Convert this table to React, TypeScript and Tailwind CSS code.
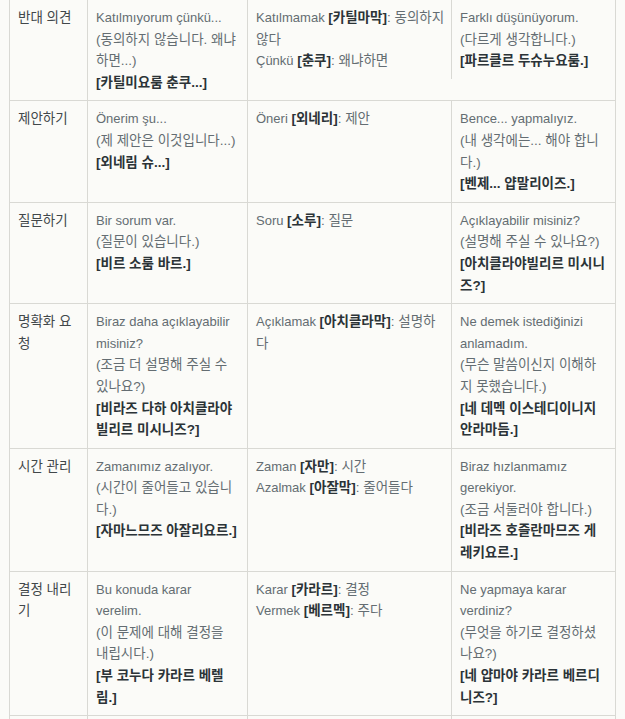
import React from "react"

type Triple = [string, string, string]

interface Row {
  label: string
  phrase: Triple
  words: Triple[]
  alt: Triple
}

// line breaks follow the narrow table columns
const rows: Row[] = [
  {
    label: "반대 의견",
    phrase: ["Katılmıyorum çünkü...", "(동의하지 않습니다. 왜냐\n하면...)", "[카틸미요룸 춘쿠...]"],
    words: [
      ["Katılmamak", "카틸마막", "동의하지\n않다"],
      ["Çünkü", "춘쿠", "왜냐하면"],
    ],
    alt: ["Farklı düşünüyorum.", "(다르게 생각합니다.)", "[파르클르 두슈누요룸.]"],
  },
  {
    label: "제안하기",
    phrase: ["Önerim şu...", "(제 제안은 이것입니다...)", "[외네림 슈...]"],
    words: [["Öneri", "외네리", "제안"]],
    alt: ["Bence... yapmalıyız.", "(내 생각에는... 해야 합니\n다.)", "[벤제... 얍말리이즈.]"],
  },
  {
    label: "질문하기",
    phrase: ["Bir sorum var.", "(질문이 있습니다.)", "[비르 소룸 바르.]"],
    words: [["Soru", "소루", "질문"]],
    alt: ["Açıklayabilir misiniz?", "(설명해 주실 수 있나요?)", "[아치클라야빌리르 미시니\n즈?]"],
  },
  {
    label: "명확화 요\n청",
    phrase: [
      "Biraz daha açıklayabilir\nmisiniz?",
      "(조금 더 설명해 주실 수\n있나요?)",
      "[비라즈 다하 아치클라야\n빌리르 미시니즈?]",
    ],
    words: [["Açıklamak", "아치클라막", "설명하\n다"]],
    alt: [
      "Ne demek istediğinizi\nanlamadım.",
      "(무슨 말씀이신지 이해하\n지 못했습니다.)",
      "[네 데멕 이스테디이니지\n안라마듬.]",
    ],
  },
  {
    label: "시간 관리",
    phrase: ["Zamanımız azalıyor.", "(시간이 줄어들고 있습니\n다.)", "[자마느므즈 아잘리요르.]"],
    words: [
      ["Zaman", "자만", "시간"],
      ["Azalmak", "아잘막", "줄어들다"],
    ],
    alt: ["Biraz hızlanmamız\ngerekiyor.", "(조금 서둘러야 합니다.)", "[비라즈 호즐란마므즈 게\n레키요르.]"],
  },
  {
    label: "결정 내리\n기",
    phrase: ["Bu konuda karar\nverelim.", "(이 문제에 대해 결정을\n내립시다.)", "[부 코누다 카라르 베렐\n림.]"],
    words: [
      ["Karar", "카라르", "결정"],
      ["Vermek", "베르멕", "주다"],
    ],
    alt: ["Ne yapmaya karar\nverdiniz?", "(무엇을 하기로 결정하셨\n나요?)", "[네 얍마야 카라르 베르디\n니즈?]"],
  },
  {
    label: "회의 마무\n리",
    phrase: ["Toplantıyı burada\nbitirelim.", "(회의를 여기서 마칩시다.)", "[토플란트유 부라다 비티\n렐림.]"],
    words: [["Bitirmek", "비티르멕", "끝내다"]],
    alt: ["Katılımınız için\nteşekkürler.", "(참석해 주셔서 감사합니\n다.)", "[카틀르므느즈 이친 테셰\n퀴르레르.]"],
  },
]

// hangul in Noto CJK runs narrow, so korean text gets a slightly bigger size
const cell = "border-l border-t border-[#d9d9d4] pl-2 pr-1.5 py-[7px] whitespace-pre-line"

function PhraseCell({ lines }: { lines: Triple }) {
  return (
    <div className={cell}>
      <div className="text-[13px] text-[#646d72]">{lines[0]}</div>
      <div className="text-[13.5px] text-[#646d72]">{lines[1]}</div>
      <div className="text-[13.5px] font-bold text-[#2b3337]">{lines[2]}</div>
    </div>
  )
}

export default function App() {
  return (
    <div className="h-[719px] overflow-hidden bg-[#fbfbf8] font-['Liberation_Sans','Noto_Sans_CJK_KR',sans-serif] leading-[21.6px]">
      <div className="ml-[9px] mt-[-1px] grid w-[607px] grid-cols-[78px_160px_204px_165px]">
        {rows.map((row) => (
          <React.Fragment key={row.label}>
            <div className={cell}>
              <div className="text-[13.5px] text-[#41474a]">{row.label}</div>
            </div>
            <PhraseCell lines={row.phrase} />
            <div className={cell}>
              {row.words.map(([tr, pron, ko]) => (
                <div key={tr} className="text-[13px] text-[#646d72]">
                  {tr} <span className="text-[13.5px] font-bold text-[#2b3337]">[{pron}]</span>
                  <span className="text-[13.5px]">: {ko}</span>
                </div>
              ))}
            </div>
            <div className="border-r border-[#d9d9d4]">
              <PhraseCell lines={row.alt} />
            </div>
          </React.Fragment>
        ))}
      </div>
    </div>
  )
}
